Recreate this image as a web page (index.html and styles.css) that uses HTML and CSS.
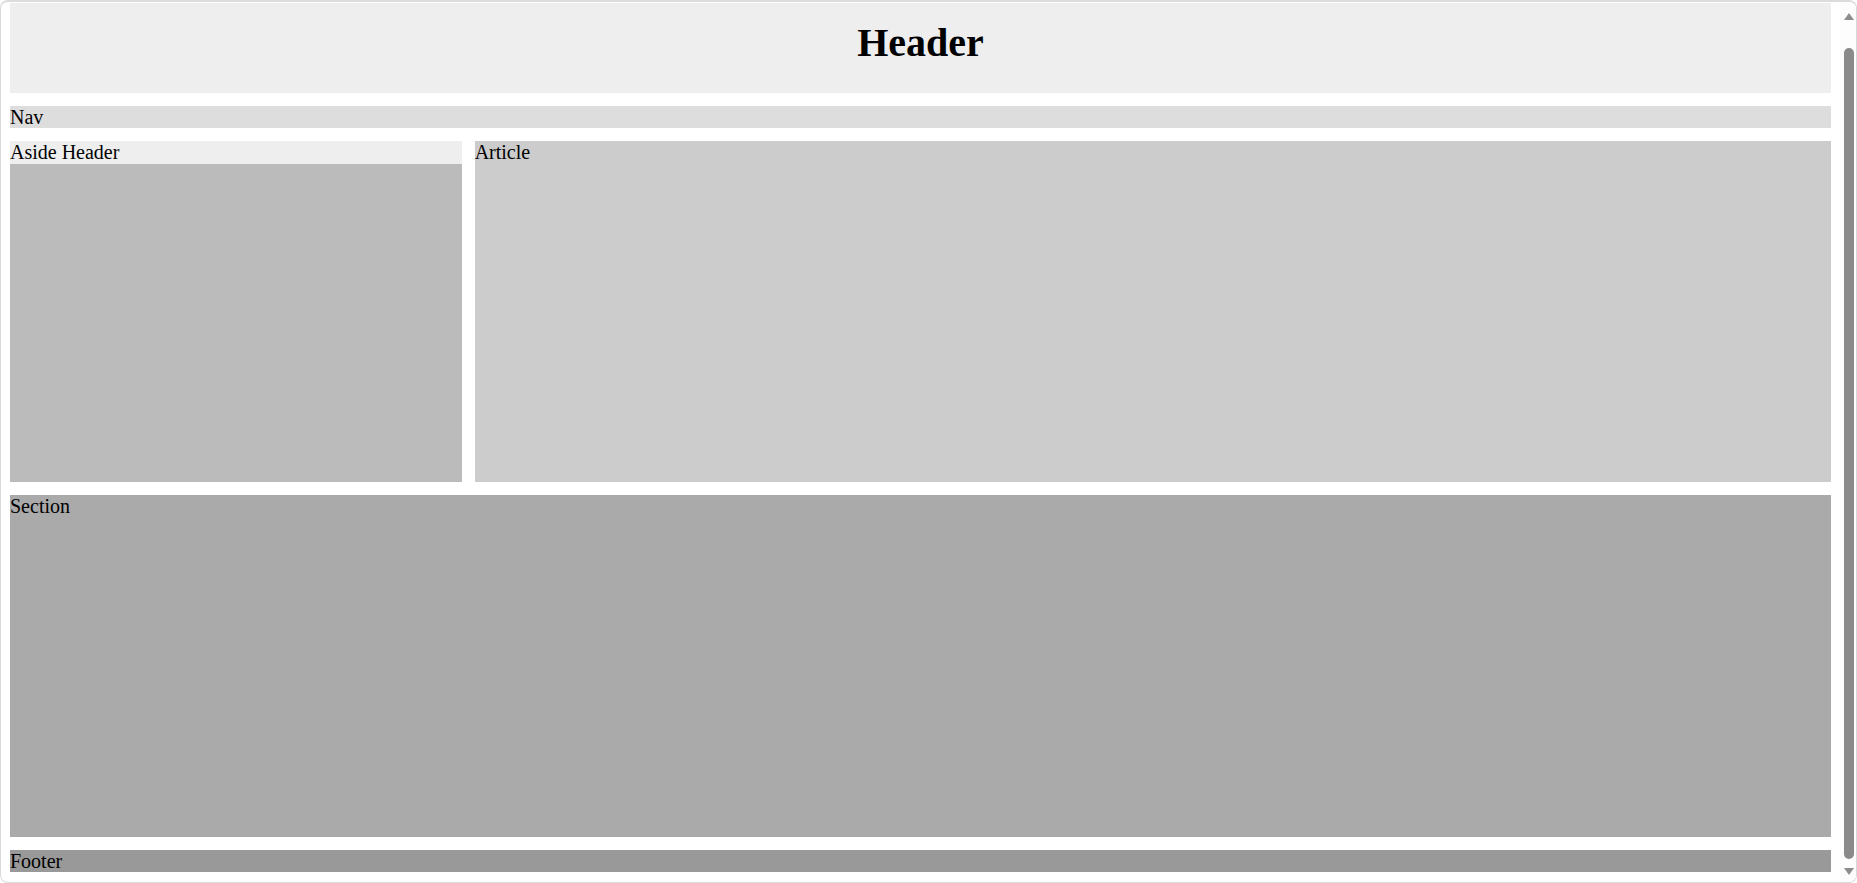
FILE: index.html
```html
<!DOCTYPE html>
<html lang="en">
<head>
<meta charset="utf-8">
<title>Grid Layout</title>
<link rel="stylesheet" href="styles.css">
</head>
<body>
<div class="frame">
  <div class="page">
    <header class="header"><h1 class="title">Header</h1></header>
    <nav class="nav">Nav</nav>
    <div class="middle">
      <aside class="aside">
        <div class="aside-header">Aside Header</div>
      </aside>
      <article class="article">Article</article>
    </div>
    <section class="section">Section</section>
    <footer class="footer">Footer</footer>
  </div>
  <div class="scrollbar">
    <div class="arrow arrow-up"></div>
    <div class="track"><div class="thumb"></div></div>
    <div class="arrow arrow-down"></div>
  </div>
</div>
</body>
</html>
```
FILE: styles.css
```css
html, body {
  margin: 0;
  padding: 0;
  background: #ffffff;
}
body {
  font-family: "Liberation Serif", "Times New Roman", serif;
  font-size: 20px;
  line-height: 22.5px;
  color: #000;
}
.frame {
  box-sizing: border-box;
  width: 1857px;
  height: 883px;
  border: 1px solid #d9d9d9;
  border-top: 2px solid #dcdcdc;
  border-radius: 8px;
  overflow: hidden;
  display: flex;
  background: #fff;
}
.page {
  flex: 1;
  padding: 1px 9px 0 9px;
  display: flex;
  flex-direction: column;
  gap: 12.5px;
  min-width: 0;
}
.header {
  background: #eeeeee;
  height: 90px;
  box-sizing: border-box;
  padding-top: 17px;
  text-align: center;
  flex: none;
}
.title {
  margin: 0;
  font-size: 40px;
  line-height: 46px;
  font-weight: bold;
}
.nav {
  background: #dddddd;
  height: 22.5px;
  flex: none;
}
.middle {
  display: grid;
  grid-template-columns: 1fr 3fr;
  column-gap: 12.5px;
  height: 341.5px;
  flex: none;
}
.aside {
  background: #bbbbbb;
}
.aside-header {
  background: #eeeeee;
  height: 23px;
}
.article {
  background: #cccccc;
}
.section {
  background: #aaaaaa;
  height: 342.5px;
  flex: none;
}
.footer {
  background: #999999;
  height: 22.5px;
  flex: none;
}
.scrollbar {
  width: 16px;
  flex: none;
  display: flex;
  flex-direction: column;
  align-items: center;
  padding-top: 11px;
  padding-bottom: 7px;
  box-sizing: border-box;
  background: #fdfdfd;
}
.arrow {
  width: 0;
  height: 0;
  border-left: 5.5px solid transparent;
  border-right: 5.5px solid transparent;
  margin-left: 2px;
}
.arrow-up {
  border-bottom: 7.5px solid #8d8d8d;
}
.arrow-down {
  border-top: 7.5px solid #8d8d8d;
}
.track {
  flex: 1;
  display: flex;
  flex-direction: column;
  padding: 28px 0 9px 0;
  margin-left: 2px;
}
.thumb {
  flex: 1;
  width: 10px;
  border-radius: 5px;
  background: #8a8a8a;
}
```
